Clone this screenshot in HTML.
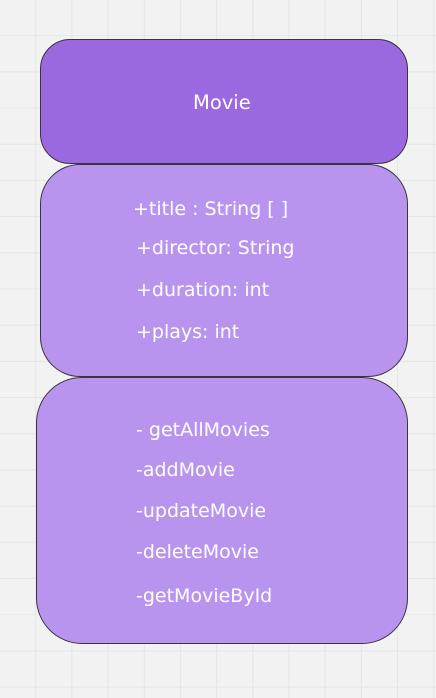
<!DOCTYPE html>
<html><head><style>
html,body{margin:0;padding:0}
body{width:436px;height:698px;position:relative;overflow:hidden;background-color:#f2f2f2;
background-image:linear-gradient(#e5e5e5 1px,transparent 1px),linear-gradient(90deg,#e5e5e5 1px,transparent 1px);
background-size:36.2px 36.2px;background-position:-1px -1px;font-family:"DejaVu Sans","Liberation Sans",sans-serif;color:#fff}
.b{position:absolute;border:1px solid #3a3340;box-sizing:border-box}
.t{position:absolute;font-size:19px;white-space:nowrap;line-height:1}
</style></head><body>
<div class="b" style="left:40px;top:39px;width:368px;height:125px;border-radius:30px;background:#9b69df"></div>
<div class="b" style="left:40px;top:164px;width:368px;height:213px;border-radius:40px;background:#b994ef"></div>
<div class="b" style="left:36px;top:377px;width:372px;height:267px;border-radius:46px;background:#b994ef"></div>
<div class="t" style="left:193px;top:93px;font-size:19.5px">Movie</div>
<div class="t" style="left:133px;top:200px">+title : String [ ]</div>
<div class="t" style="left:136px;top:239px">+director: String</div>
<div class="t" style="left:136px;top:281px">+duration: int</div>
<div class="t" style="left:136px;top:323px">+plays: int</div>
<div class="t" style="left:136px;top:421px">- getAllMovies</div>
<div class="t" style="left:136px;top:461px">-addMovie</div>
<div class="t" style="left:136px;top:502px">-updateMovie</div>
<div class="t" style="left:136px;top:543px">-deleteMovie</div>
<div class="t" style="left:136px;top:587px">-getMovieById</div>
</body></html>
